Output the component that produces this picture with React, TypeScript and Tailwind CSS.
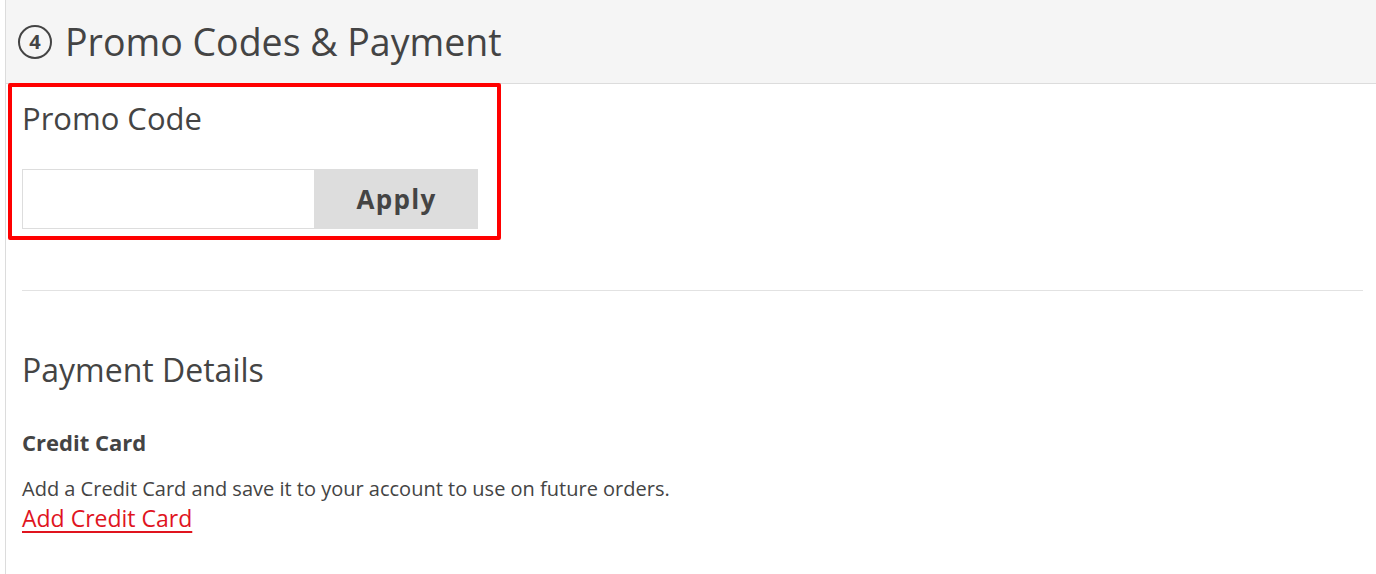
export default function App() {
  return (
    <div className="min-h-[574px] bg-white text-[#444]" style={{ fontFamily: "'Open Sans', 'Noto Sans', sans-serif" }}>
      <div className="ml-[5px] border-l border-[#dcdcdc] min-h-[574px]">
        <header className="flex h-[84px] items-center gap-[13px] border-b border-[#dcdcdc] bg-[#f5f5f5] pl-[12px]">
          <span className="flex h-[34px] w-[34px] items-center justify-center rounded-full border-[2.5px] border-[#444] text-[20px] font-bold leading-none">
            4
          </span>
          <h1 className="text-[37.5px] font-normal leading-none text-[#444]">Promo Codes &amp; Payment</h1>
        </header>

        <div className="pr-[13px]">
          <section className="-mt-px ml-[2px] w-[493px] rounded-[2px] border-[4px] border-[#ff0000] px-[10px] pb-[7px] pt-[11px]">
            <h2 className="text-[31px] font-normal leading-[40px]">Promo Code</h2>
            <div className="mt-[31px] flex h-[60px] w-[456px]">
              <input className="h-full w-[293px] border border-[#dddddd] bg-white outline-none" />
              <button className="h-full flex-1 bg-[#dddddd] text-[26px] font-bold tracking-wider text-[#444]">Apply</button>
            </div>
          </section>

          <hr className="ml-[16px] mt-[50px] border-t border-[#e2e2e2]" />

          <section className="pl-[16px] pt-[59px]">
            <h2 className="text-[32px] font-normal leading-[40px]">Payment Details</h2>
            <h3 className="mt-[38px] text-[22px] font-bold leading-[28px]">Credit Card</h3>
            <p className="mt-[18px] text-[20px] leading-[30px]">Add a Credit Card and save it to your account to use on future orders.</p>
            <a href="#" className="mt-[1px] block w-fit text-[23px] leading-[26px] text-[#e0141e] underline underline-offset-4">
              Add Credit Card
            </a>
          </section>
        </div>
      </div>
    </div>
  );
}
